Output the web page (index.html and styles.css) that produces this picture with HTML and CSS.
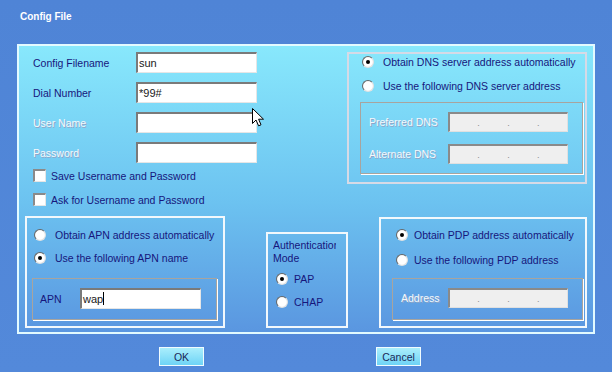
FILE: index.html
```html
<!DOCTYPE html>
<html lang="en">
<head>
  <meta charset="UTF-8">
  <title>Config File</title>
  <link rel="stylesheet" href="styles.css">
</head>
<body>
  <div class="window">
    <div class="title">Config File</div>

    <div class="panel">
      <div class="top">
        <div class="account">
          <div class="row"><span class="lbl">Config Filename</span><div class="field">sun</div></div>
          <div class="row"><span class="lbl">Dial Number</span><div class="field">*99#</div></div>
          <div class="row"><span class="lbl off">User Name</span><div class="field"></div></div>
          <div class="row"><span class="lbl off">Password</span><div class="field"></div></div>
          <div class="check"><span class="box"></span>Save Username and Password</div>
          <div class="check"><span class="box"></span>Ask for Username and Password</div>
        </div>

        <div class="group dns">
          <div class="opt"><span class="radio on"></span>Obtain DNS server address automatically</div>
          <div class="opt"><span class="radio"></span>Use the following DNS server address</div>
          <div class="inset">
            <div class="row"><span class="lbl off">Preferred DNS</span><div class="ip"><i>.</i><i>.</i><i>.</i></div></div>
            <div class="row"><span class="lbl off">Alternate DNS</span><div class="ip"><i>.</i><i>.</i><i>.</i></div></div>
          </div>
        </div>
      </div>

      <div class="bottom">
        <div class="group apn">
          <div class="opt"><span class="radio"></span>Obtain APN address automatically</div>
          <div class="opt"><span class="radio on"></span>Use the following APN name</div>
          <div class="inset">
            <div class="row"><span class="lbl">APN</span><div class="field">wap<span class="caret"></span></div></div>
          </div>
        </div>

        <div class="group auth">
          <div class="cap">Authentication Mode</div>
          <div class="opt"><span class="radio on"></span>PAP</div>
          <div class="opt"><span class="radio"></span>CHAP</div>
        </div>

        <div class="group pdp">
          <div class="opt"><span class="radio on"></span>Obtain PDP address automatically</div>
          <div class="opt"><span class="radio"></span>Use the following PDP address</div>
          <div class="inset">
            <div class="row"><span class="lbl off">Address</span><div class="ip"><i>.</i><i>.</i><i>.</i></div></div>
          </div>
        </div>
      </div>
    </div>

    <div class="buttons">
      <button>OK</button>
      <button>Cancel</button>
    </div>

    <!-- mouse pointer left over the dialog -->
    <svg class="pointer" width="14" height="19" viewBox="0 0 14 19">
      <path d="M0.5 0.5 L0.5 15.5 L4 12 L6.6 17.8 L9 16.8 L6.6 11.2 L11.5 11.2 Z" fill="#fff" stroke="#000" stroke-width="1"/>
    </svg>
  </div>
</body>
</html>
```

FILE: styles.css
```css
body { margin: 0; background: #5288d9; font-family: "Liberation Sans", Arial, sans-serif; font-size: 10.5px; color: #16167c; }
.window { position: relative; width: 612px; height: 372px; overflow: hidden; background: linear-gradient(#4f84d6, #5389da); }
.title { height: 44px; box-sizing: border-box; padding: 11px 0 0 20px; font-size: 10px; line-height: 12px; font-weight: bold; color: #fff; }

.panel { margin: 0 17px; border: 2px solid #e2faff; background: linear-gradient(#88e8fc, #6cc2f0 55%, #5a96e0); padding: 6px 6px 4px; }
.top { display: flex; justify-content: space-between; align-items: flex-start; }
.bottom { display: flex; align-items: flex-end; margin-top: 10px; }

.account { margin-left: 8px; width: 224px; display: flex; flex-direction: column; }
.row { display: flex; align-items: center; height: 21px; }
.row + .row { margin-top: 9px; }
.account .lbl { width: 103px; }
.lbl { flex: none; }
.off { color: #f4f8fc; text-shadow: 1px 1px 0 #8ea6c8; }

.field { width: 121px; height: 21px; box-sizing: border-box; background: #fff; border: 1px solid #e6e6e6; border-top: 2px solid #7a7a7a; border-left: 2px solid #7a7a7a; padding-left: 1px; line-height: 18px; font-size: 11px; color: #202020; }
.caret { display: inline-block; width: 1px; height: 13px; background: #000; vertical-align: -2px; }
.ip { width: 120px; height: 20px; box-sizing: border-box; background: #efefef; border: 1px solid #e0e0e0; border-top: 2px solid #8a8a8a; border-left: 2px solid #8a8a8a; display: flex; justify-content: space-evenly; align-items: center; color: #8c8c8c; font-style: normal; font-size: 9px; }
.ip i { font-style: normal; }

.check { display: flex; align-items: center; gap: 5px; height: 13px; margin-top: 11px; }
.row + .check { margin-top: 6px; }
.box { width: 13px; height: 13px; box-sizing: border-box; background: #fff; border: 1px solid #e6e6e6; border-top: 2px solid #8a8a8a; border-left: 2px solid #8a8a8a; }

.group { box-sizing: border-box; border: 2px solid #f2f8fc; display: flex; flex-direction: column; }
.opt { display: flex; align-items: center; height: 14px; gap: 9px; }
.radio { flex: none; position: relative; width: 12px; height: 12px; box-sizing: border-box; border-radius: 50%; border: 1px solid; border-color: #686868 #e2e2e2 #e2e2e2 #686868; background: radial-gradient(#fff 55%, #e2e2e2); }
.radio.on::after { content: ""; position: absolute; left: 3px; top: 3px; width: 4px; height: 4px; border-radius: 50%; background: #000; }
.inset { border: 1px solid #a8a49e; box-shadow: 1px 1px 0 #fff; box-sizing: border-box; }

.dns { width: 240px; padding: 1px 2px 8px 11px; border-color: #d6dae6; }
.dns .opt { margin-left: 2px; }
.dns .opt + .opt { margin-top: 10px; }
.dns .inset { margin-top: 9px; height: 72px; padding: 9px 0 0 8px; }
.dns .inset .row { height: 20px; }
.dns .inset .row + .row { margin-top: 12px; }
.dns .lbl { width: 79px; }

.apn { width: 200px; height: 112px; padding: 10px 6px 0 5px; }
.apn .opt { margin-left: 2px; }
.apn .opt + .opt { margin-top: 9px; }
.apn .inset { margin-top: 13px; height: 42px; padding: 9px 0 0 7px; }
.apn .lbl { width: 40px; }

.auth { width: 82px; height: 96px; margin-left: 41px; padding: 5px 0 0 5px; }
.auth .cap { width: 63px; line-height: 13px; overflow: hidden; }
.auth .opt { margin-left: 3px; gap: 6px; }
.auth .cap + .opt { margin-top: 7px; }
.auth .opt + .opt { margin-top: 9px; }

.pdp { width: 208px; height: 111px; margin-left: 31px; padding: 9px 2px 0 11px; }
.pdp .opt { margin-left: 4px; gap: 6px; }
.pdp .opt + .opt { margin-top: 11px; }
.pdp .inset { margin-top: 11px; height: 42px; padding: 9px 0 0 8px; }
.pdp .inset .row { height: 20px; }
.pdp .lbl { width: 47px; }

.buttons { display: flex; gap: 172px; padding-left: 159px; margin-top: 13px; }
.buttons button { width: 45px; height: 19px; padding: 0; border: 1px solid #f0fcff; background: linear-gradient(#aaeefc, #6ed4f6); font-family: "Liberation Sans", Arial, sans-serif; font-size: 10.5px; color: #1a2858; }

.pointer { position: absolute; left: 252px; top: 108px; }
```
